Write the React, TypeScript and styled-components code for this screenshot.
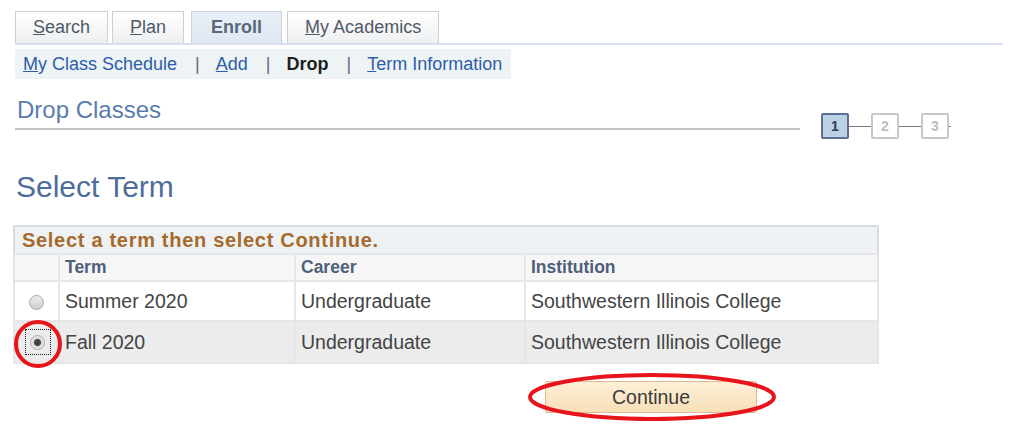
import styled, { createGlobalStyle } from 'styled-components';

const GlobalStyle = createGlobalStyle`
  html, body {
    margin: 0;
    padding: 0;
    background: #fff;
    font-family: 'Liberation Sans', Arial, sans-serif;
  }
`;

const Page = styled.div`
  width: 1024px;
  height: 426px;
  overflow: hidden;
  padding: 10px 0 0 15px;
  box-sizing: border-box;
`;

const TabBar = styled.div`
  display: flex;
  align-items: flex-end;
  gap: 4px;
  width: 988px;
  height: 33px;
  border-bottom: 2px solid #d6dfeb;
`;

const Tab = styled.div<{ $active?: boolean }>`
  height: 32px;
  padding: ${(p) => (p.$active ? '0 19px' : '0 17px')};
  margin: ${(p) => (p.$active ? '0 1px 0 3px' : '0')};
  display: flex;
  align-items: center;
  box-sizing: border-box;
  border: 1px solid ${(p) => (p.$active ? '#c6d3e2' : '#cdcfd2')};
  border-bottom: none;
  background: ${(p) =>
    p.$active
      ? 'linear-gradient(#e9eff6, #dfe8f2)'
      : 'linear-gradient(#ffffff, #eeeff0)'};
  font-size: 18px;
  font-weight: ${(p) => (p.$active ? 700 : 400)};
  color: ${(p) => (p.$active ? '#58677c' : '#4f5968')};
`;

const Key = styled.span`
  text-decoration: underline;
`;

const SubNav = styled.div`
  margin-top: 4px;
  width: 496px;
  height: 30px;
  background: #eef3f5;
  display: flex;
  align-items: center;
  padding-left: 8px;
  box-sizing: border-box;
  font-size: 18px;
  white-space: nowrap;
`;

const SubLink = styled.span<{ $current?: boolean }>`
  color: ${(p) => (p.$current ? '#1f1f1f' : '#2d5ea8')};
  font-weight: ${(p) => (p.$current ? 700 : 400)};
`;

const Sep = styled.span`
  color: #6f6485;
  margin: 0 16px 0 18px;
`;

const HeaderRow = styled.div`
  display: flex;
  align-items: flex-end;
  margin-top: 17px;
`;

const PageTitle = styled.div`
  width: 785px;
  font-size: 24px;
  color: #5a7cad;
  padding: 0 0 4px 2px;
  border-bottom: 2px solid #c4c4c4;
  box-sizing: border-box;
`;

const Steps = styled.div`
  display: flex;
  align-items: center;
  margin: 0 0 -9px 21px;
`;

const StepBox = styled.div<{ $active?: boolean }>`
  width: 28px;
  height: 26px;
  box-sizing: border-box;
  border: ${(p) => (p.$active ? '2px solid #5b6f92' : '2px solid #c8c8c8')};
  border-radius: 2px;
  background: ${(p) => (p.$active ? '#bcd0e6' : '#fff')};
  color: ${(p) => (p.$active ? '#2d3f5c' : '#bdbdbd')};
  font-size: 14px;
  font-weight: 700;
  display: flex;
  align-items: center;
  justify-content: center;
`;

const StepLine = styled.div<{ $w: number }>`
  width: ${(p) => p.$w}px;
  height: 1px;
  background: #777;
`;

const SectionTitle = styled.div`
  margin-top: 40px;
  font-size: 30px;
  color: #4d6d9a;
  padding-left: 1px;
`;

const Grid = styled.table`
  margin: 21px 0 0 -2px;
  width: 866px;
  border-collapse: collapse;
  border: 2px solid #d8dce0;
  font-size: 19.5px;
`;

const Caption = styled.td`
  background: #eef2f4;
  color: #a66a2c;
  font-weight: 700;
  font-size: 20px;
  letter-spacing: 0.7px;
  height: 26px;
  padding: 0 0 0 7px;
  border-bottom: 2px solid #e6e6e6;
`;

const Th = styled.td<{ $w: number }>`
  width: ${(p) => p.$w}px;
  height: 25px;
  background: #f6f6f6;
  color: #4f607b;
  font-weight: 700;
  font-size: 17.5px;
  padding: 0 0 0 5px;
  border: 2px solid #e6e6e6;
  border-top: none;
`;

const Td = styled.td<{ $alt?: boolean }>`
  height: ${(p) => (p.$alt ? 40 : 38)}px;
  background: ${(p) => (p.$alt ? '#ececec' : '#fff')};
  color: #444;
  padding: 0 0 0 5px;
  border: 2px solid #e6e6e6;
`;

const RadioCell = styled(Td)`
  position: relative;
  padding: 0;
  text-align: center;
`;

const Radio = styled.span<{ $on?: boolean }>`
  display: inline-block;
  width: 15px;
  height: 15px;
  border-radius: 50%;
  box-sizing: border-box;
  border: 1px solid #a9a9a9;
  background: ${(p) =>
    p.$on
      ? 'radial-gradient(circle, #444 0 3px, #d6d6d6 4px, #eee 7px)'
      : 'linear-gradient(#ececec, #cfcfcf)'};
  vertical-align: middle;
`;

const FocusBox = styled.span`
  display: inline-flex;
  align-items: center;
  justify-content: center;
  width: 24px;
  height: 24px;
  border: 1px dotted #222;
  margin-left: 2px;
`;

const Mark = styled.svg`
  position: absolute;
  pointer-events: none;
  overflow: visible;
`;

const ButtonRow = styled.div`
  margin: 17px 0 0 530px;
  position: relative;
  width: 212px;
`;

const ContinueButton = styled.button`
  width: 212px;
  height: 32px;
  border: 1px solid #dcbd92;
  border-radius: 2px;
  background: linear-gradient(#fdefd8, #f8e0b8);
  font-family: 'Liberation Sans', Arial, sans-serif;
  font-size: 19.5px;
  color: #3a3a3a;
`;

const rows = [
  { term: 'Summer 2020', career: 'Undergraduate', inst: 'Southwestern Illinois College' },
  { term: 'Fall 2020', career: 'Undergraduate', inst: 'Southwestern Illinois College' },
];

export default function App() {
  return (
    <Page>
      <GlobalStyle />
      <TabBar>
        <Tab><Key>S</Key>earch</Tab>
        <Tab><Key>P</Key>lan</Tab>
        <Tab $active>Enroll</Tab>
        <Tab><Key>M</Key>y Academics</Tab>
      </TabBar>
      <SubNav>
        <SubLink><Key>M</Key>y Class Schedule</SubLink>
        <Sep>|</Sep>
        <SubLink><Key>A</Key>dd</SubLink>
        <Sep>|</Sep>
        <SubLink $current>Drop</SubLink>
        <Sep>|</Sep>
        <SubLink><Key>T</Key>erm Information</SubLink>
      </SubNav>
      <HeaderRow>
        <PageTitle>Drop Classes</PageTitle>
        <Steps>
          <StepBox $active>1</StepBox>
          <StepLine $w={22} />
          <StepBox>2</StepBox>
          <StepLine $w={22} />
          <StepBox>3</StepBox>
          <StepLine $w={2} />
        </Steps>
      </HeaderRow>
      <SectionTitle>Select Term</SectionTitle>
      <Grid>
        <tbody>
          <tr>
            <Caption colSpan={4}>Select a term then select Continue.</Caption>
          </tr>
          <tr>
            <Th $w={38}></Th>
            <Th $w={229}>Term</Th>
            <Th $w={223}>Career</Th>
            <Th $w={346}>Institution</Th>
          </tr>
          {rows.map((r, i) => (
            <tr key={r.term}>
              <RadioCell $alt={i === 1}>
                {i === 1 ? (
                  <>
                    <FocusBox><Radio $on /></FocusBox>
                    <Mark width="48" height="48" style={{ left: -1, top: -2 }}>
                      <circle cx="24" cy="24" r="22" fill="none" stroke="#e8141b" strokeWidth="4" />
                    </Mark>
                  </>
                ) : (
                  <Radio />
                )}
              </RadioCell>
              <Td $alt={i === 1}>{r.term}</Td>
              <Td $alt={i === 1}>{r.career}</Td>
              <Td $alt={i === 1}>{r.inst}</Td>
            </tr>
          ))}
        </tbody>
      </Grid>
      <ButtonRow>
        <ContinueButton>Continue</ContinueButton>
        <Mark width="250" height="50" style={{ left: -17, top: -8 }}>
          <ellipse cx="124" cy="24" rx="122" ry="22" fill="none" stroke="#e8141b" strokeWidth="4" />
        </Mark>
      </ButtonRow>
    </Page>
  );
}
